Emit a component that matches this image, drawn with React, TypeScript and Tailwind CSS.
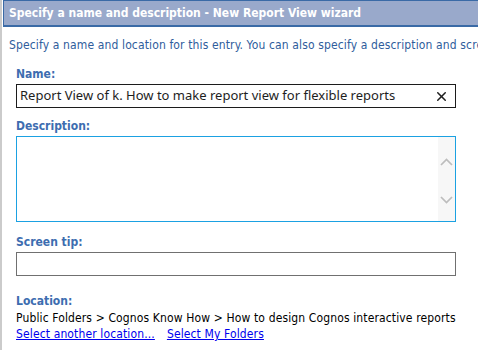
import { X } from "lucide-react"

const ui = { fontFamily: '"DejaVu Sans Condensed", "DejaVu Sans", sans-serif' }
const field = { fontFamily: '"Noto Sans", "Open Sans", sans-serif' }

function Label({ text, className = "" }: { text: string; className?: string }) {
  return (
    <div className={`h-[16px] text-[12px] leading-[16px] font-bold text-[#3d6db0] ${className}`}>
      {text}
    </div>
  )
}

export default function App() {
  return (
    <div className="flex h-[350px] w-[478px] overflow-hidden bg-white" style={ui}>
      {/* frame edge */}
      <div className="w-[2px] shrink-0 bg-[#cbcbcb]" />
      <div className="ml-px min-w-0 flex-1">
        {/* title bar */}
        <div className="flex h-[27px] items-start border-t border-b-2 border-l border-[#3a6aa6] bg-[#99a9cb] pl-[5px] pt-[4px]">
          <span className="text-[12px] leading-[16px] font-bold whitespace-nowrap text-white">
            Specify a name and description - New Report View wizard
          </span>
        </div>

        <div className="mt-[10px] h-[16px] overflow-hidden whitespace-nowrap pl-[6px] text-[12px] leading-[16px] tracking-[0.13px] text-[#2f5d9c]">
          Specify a name and location for this entry. You can also specify a description and screen tip.
        </div>

        <div className="w-[453px] pl-[13px]">
          <Label text="Name:" className="mt-[13px]" />
          <div className="mt-[2px] flex h-[24px] items-center border border-[#1c1c1c] pl-[3px] pr-[6px]">
            <span className="flex-1 whitespace-nowrap text-[13px] text-[#1e1e1e]" style={field}>
              Report View of k. How to make report view for flexible reports
            </span>
            <X className="h-[15px] w-[15px] text-[#1f1f1f]" strokeWidth={2.4} />
          </div>

          <Label text="Description:" className="mt-[10px]" />
          <div className="mt-[2px] flex h-[86px] border border-[#1ba1e2]">
            <div className="flex-1" />
            <div className="flex w-[17px] flex-col items-center justify-between bg-[#f7f7f7] pb-[17px] pt-[21px]">
              <svg width="13" height="8" viewBox="0 0 13 8" fill="none">
                <path d="M1 7 L6.5 1.5 L12 7" stroke="#bdbdbd" strokeWidth="1.7" />
              </svg>
              <svg width="13" height="8" viewBox="0 0 13 8" fill="none">
                <path d="M1 1 L6.5 6.5 L12 1" stroke="#bdbdbd" strokeWidth="1.7" />
              </svg>
            </div>
          </div>

          <Label text="Screen tip:" className="mt-[12px]" />
          <div className="mt-[2px] h-[24px] border border-[#707070]" />

          <Label text="Location:" className="mt-[17px]" />
          <div className="mt-px h-[16px] whitespace-nowrap text-[12px] leading-[16px] tracking-[0.13px] text-black">
            Public Folders &gt; Cognos Know How &gt; How to design Cognos interactive reports
          </div>
          <div className="flex h-[16px] gap-[12px] whitespace-nowrap text-[12px] leading-[16px] tracking-[0.13px] text-[#0000ee]">
            <a className="underline">Select another location...</a>
            <a className="underline">Select My Folders</a>
          </div>
        </div>
      </div>
    </div>
  )
}
